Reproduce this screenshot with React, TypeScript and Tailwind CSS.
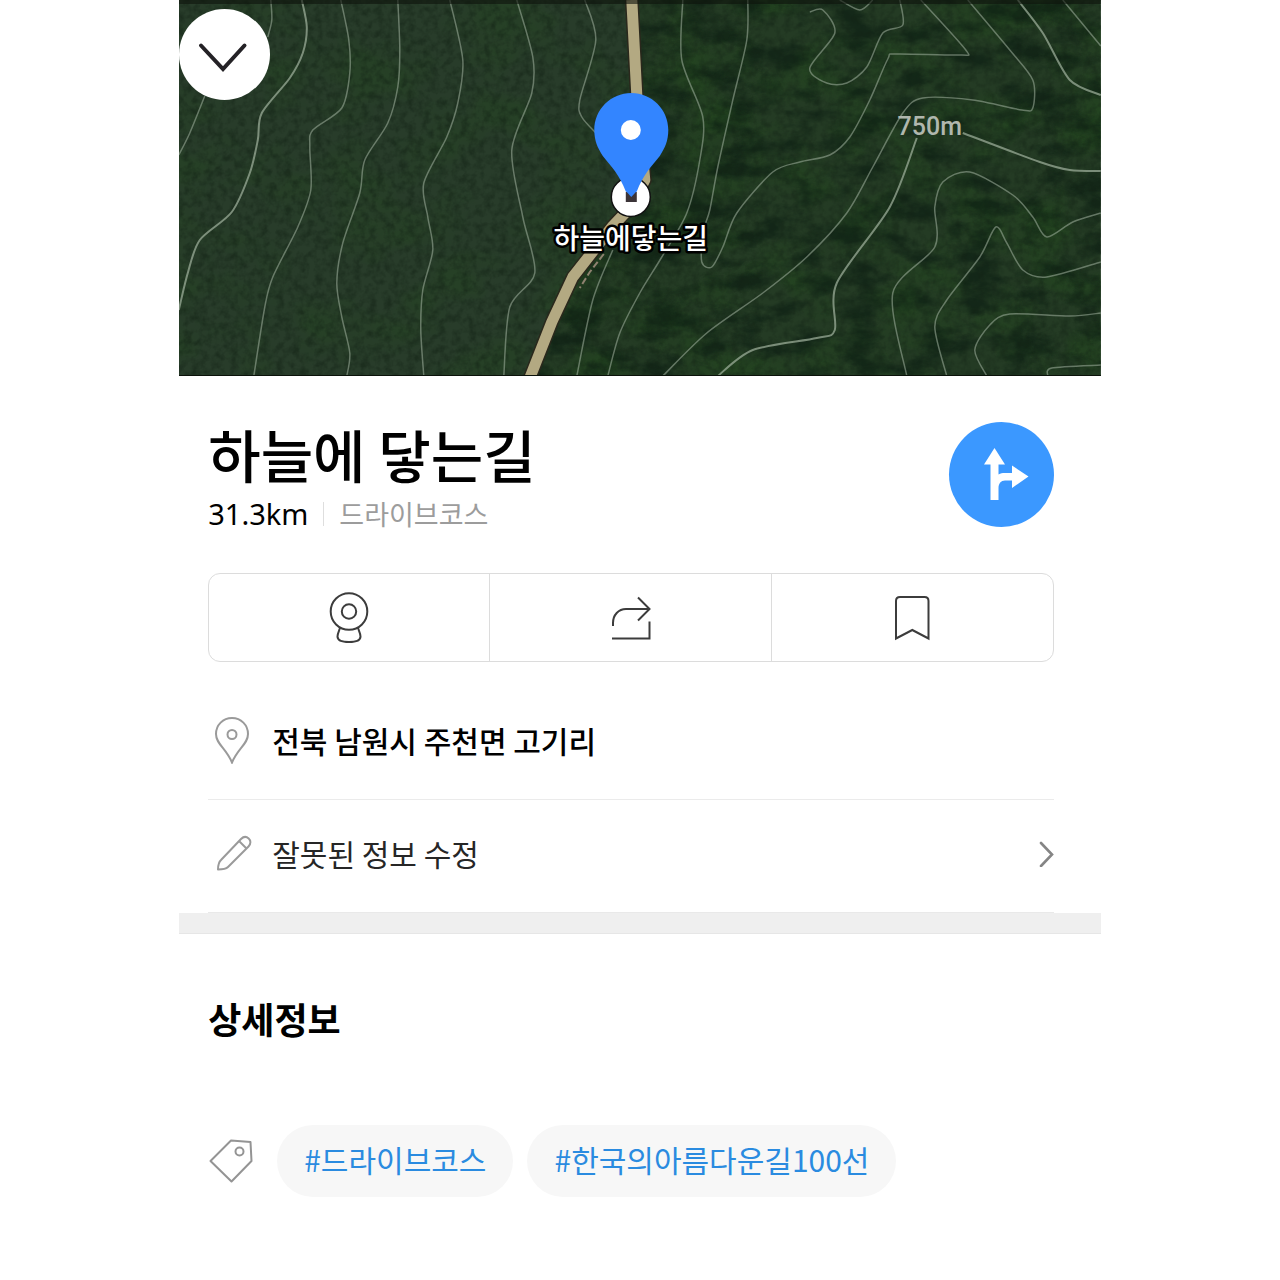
import React from 'react';

type Point = [number, number];

interface Contour {
  points: Point[];
  bold?: boolean;
}

const contours: Contour[] = [
  { bold: true, points: [[302, 0], [307, 27], [303, 53], [290, 78], [262, 113], [258, 140], [250, 173], [232, 212], [200, 240], [188, 273], [179, 310]] },
  { points: [[271, 0], [272, 20], [268, 37]] },
  { points: [[205, 96], [190, 133], [179, 155]] },
  { points: [[341, 0], [349, 40], [350, 73], [342, 108], [313, 130], [310, 147], [311, 190], [298, 227], [273, 277], [265, 307], [254, 376]] },
  { points: [[398, 0], [400, 50], [398, 87], [388, 123], [365, 160], [360, 193], [343, 243], [337, 283], [342, 317], [350, 353], [347, 376]] },
  { points: [[450, 0], [463, 60], [458, 103], [447, 137], [424, 183], [428, 217], [433, 250], [423, 290], [421, 330], [424, 376]] },
  { points: [[517, 0], [533, 57], [532, 93], [512, 150], [523, 217], [535, 273], [510, 307], [504, 376]] },
  { points: [[585, 0], [596, 40], [580, 100], [582, 117], [598, 135]] },
  { points: [[613, 250], [593, 300], [577, 376]] },
  { points: [[683, 0], [682, 60], [703, 117], [700, 160], [687, 213], [662, 257], [640, 293], [620, 333], [608, 376]] },
  { points: [[748, 0], [747, 40], [733, 100], [718, 167], [710, 210], [703, 233], [702, 262], [712, 267], [723, 247], [737, 213], [773, 172], [800, 162], [830, 155], [850, 137], [870, 100], [888, 59], [896, 54], [960, 55], [966, 50], [921, 0]] },
  { points: [[900, 0], [903, 25], [883, 33], [867, 67], [847, 83], [827, 83], [810, 68], [835, 33], [823, 10], [810, 12]] },
  { points: [[840, 0], [860, 10], [873, 0]] },
  { points: [[968, 0], [1010, 50], [1033, 80], [1033, 108], [1022, 110], [973, 100], [923, 98], [903, 113], [873, 167], [847, 213], [807, 257], [763, 293], [707, 333], [663, 376]] },
  { bold: true, points: [[917, 138], [890, 207], [837, 283], [835, 330], [817, 338], [753, 350], [718, 376]] },
  { bold: true, points: [[963, 133], [1040, 162], [1070, 170], [1101, 171]] },
  { bold: true, points: [[1018, 0], [1043, 33], [1070, 80], [1101, 95]] },
  { points: [[1063, 0], [1101, 46]] },
  { points: [[907, 376], [893, 293], [935, 247], [935, 207], [943, 182], [970, 172], [1013, 195], [1033, 217], [1047, 237], [1073, 222], [1101, 213]] },
  { points: [[947, 376], [935, 327], [947, 300], [980, 257], [996, 227], [1007, 243], [1023, 270], [1047, 277], [1101, 262]] },
  { points: [[987, 376], [975, 350], [990, 325], [1010, 314], [1070, 316], [1101, 313]] },
  { points: [[1048, 376], [1052, 368], [1101, 365]] },
];

// Catmull-Rom spline through the survey points
const smoothPath = (points: Point[]) => {
  let d = `M${points[0][0]} ${points[0][1]}`;
  for (let i = 0; i < points.length - 1; i++) {
    const p0 = points[i - 1] ?? points[i];
    const p1 = points[i];
    const p2 = points[i + 1];
    const p3 = points[i + 2] ?? p2;
    d += `C${p1[0] + (p2[0] - p0[0]) / 7} ${p1[1] + (p2[1] - p0[1]) / 7} ${p2[0] - (p3[0] - p1[0]) / 7} ${p2[1] - (p3[1] - p1[1]) / 7} ${p2[0]} ${p2[1]}`;
  }
  return d;
};

const ROAD = 'M632 0L637 95L645 180L632 206L613 226L573 277L552 322L530 378';

const SatelliteMap: React.FC = () => (
  <svg
    className="block w-full h-[376px]"
    viewBox="179 0 922 376"
    preserveAspectRatio="xMidYMid slice"
    role="img"
    aria-label="하늘에닿는길 지도"
  >
    <defs>
      <filter id="fineTrees" x="0" y="0" width="100%" height="100%" colorInterpolationFilters="sRGB">
        <feTurbulence type="fractalNoise" baseFrequency="0.13" numOctaves="3" seed="4" />
        <feColorMatrix values="0 0 0 0 0.07  0 0 0 0 0.13  0 0 0 0 0.08  2.4 0 0 0 -0.95" />
      </filter>
      <filter id="bigTrees" x="0" y="0" width="100%" height="100%" colorInterpolationFilters="sRGB">
        <feTurbulence type="fractalNoise" baseFrequency="0.025 0.045" numOctaves="5" seed="11" />
        <feColorMatrix values="0 0 0 0 0.04  0 0 0 0 0.11  0 0 0 0 0.07  3.4 0 0 0 -1.5" />
      </filter>
      <filter id="canopy" x="0" y="0" width="100%" height="100%" colorInterpolationFilters="sRGB">
        <feTurbulence type="fractalNoise" baseFrequency="0.015 0.02" numOctaves="5" seed="23" />
        <feColorMatrix values="0 0 0 0 0.14  0 0 0 0 0.29  0 0 0 0 0.12  0 2.6 0 0 -1.1" />
      </filter>
      <clipPath id="eastSide">
        <path d="M632 0L637 95L646 180L632 206L573 277L530 376H1101V0Z" />
      </clipPath>
    </defs>

    <rect x="179" width="922" height="376" fill="#283c2a" />
    <rect x="179" width="922" height="376" filter="url(#canopy)" opacity="0.35" />
    <rect x="179" width="922" height="376" filter="url(#fineTrees)" opacity="0.5" />
    <g clipPath="url(#eastSide)">
      <rect x="179" width="922" height="376" fill="#243b24" />
      <rect x="179" width="922" height="376" filter="url(#canopy)" opacity="0.6" />
      <rect x="179" width="922" height="376" filter="url(#bigTrees)" opacity="0.6" />
      <rect x="179" width="922" height="376" filter="url(#fineTrees)" opacity="0.4" />
    </g>

    <g fill="none" stroke="#a3b3a0" strokeLinejoin="round">
      {contours.map(({ points, bold }, i) => (
        <path key={i} d={smoothPath(points)} strokeWidth={bold ? 2 : 1.5} opacity={bold ? 0.7 : 0.55} />
      ))}
    </g>

    <path d={ROAD} fill="none" stroke="#2a281c" strokeWidth="14" strokeLinejoin="round" />
    <path d={ROAD} fill="none" stroke="#b3a982" strokeWidth="11" strokeLinejoin="round" />
    <path d="M604 254L590 272L580 288" fill="none" stroke="#8f8270" strokeWidth="2" strokeDasharray="7 3" />

    <text x="930" y="135" textAnchor="middle" fill="#b0b7ae" className="font-['Roboto',sans-serif] text-[25px] font-medium">
      750m
    </text>

    <circle cx="631" cy="197" r="19.5" fill="#fff" stroke="#111" strokeWidth="1.5" />
    <path
      d="M631.5 93C611 93 594.500 109.500 594.500 130C594.500 141 598 148 603 156C611 166 620 175 626 191.500H637C643 175 652 166 660 156C665 148 668.500 141 668.500 130C668.500 109.500 652 93 631.5 93Z"
      fill="#3385ff"
    />
    <rect x="626" y="192" width="11" height="10" fill="#3b3438" />
    <path d="M626 191H637L631.5 197Z" fill="#3385ff" />
    <circle cx="631" cy="130" r="10" fill="#fff" />

    <text
      x="631"
      y="249"
      textAnchor="middle"
      fill="#fff"
      stroke="#000"
      strokeWidth="5"
      strokeLinejoin="round"
      paintOrder="stroke"
      className="text-[28px] font-medium"
    >
      하늘에닿는길
    </text>

    <rect x="179" width="922" height="4" fill="#0d130c" opacity="0.6" />
    <path d="M179 375.5H1101" stroke="#0b120a" />
  </svg>
);

const RoadviewIcon: React.FC = () => (
  <svg className="w-[44px] h-[56px]" viewBox="0 0 44 56" fill="none" stroke="#3c3c3c" strokeWidth="2">
    <circle cx="22" cy="21.500" r="18.300" />
    <circle cx="22" cy="21.500" r="7.200" />
    <path d="M13 38C12 41 10.500 43.500 10.500 46.500C10.500 50.500 16 52 22 52S33.500 50.500 33.500 46.500C33.500 43.500 32 41 31 38" />
  </svg>
);

const ShareIcon: React.FC = () => (
  <svg className="w-[44px] h-[56px]" viewBox="0 0 44 56" fill="none" stroke="#3c3c3c" strokeWidth="2">
    <path d="M5 36V33C5 25 10.500 19 18 19H41" />
    <path d="M30 7.500L41.500 19L30 30.500" />
    <path d="M41.500 31.500V48.500H4" />
  </svg>
);

const BookmarkIcon: React.FC = () => (
  <svg className="w-[44px] h-[56px]" viewBox="0 0 44 56" fill="none" stroke="#3c3c3c" strokeWidth="2">
    <path d="M6 48.500V11C6 8.500 7.500 7 10 7H34.500C37 7 38.500 8.500 38.500 11V48.500L22.300 40Z" />
  </svg>
);

const PinIcon: React.FC = () => (
  <svg className="w-[48px] h-[48px]" viewBox="0 0 48 48" fill="none" stroke="#9a9a9a" strokeWidth="2">
    <path d="M24 2C15 2 8 9 8 18C8 28 18 32 24 46.500C30 32 40 28 40 18C40 9 33 2 24 2Z" />
    <circle cx="24" cy="18.500" r="4.500" />
  </svg>
);

const PencilIcon: React.FC = () => (
  <svg className="w-[48px] h-[48px]" viewBox="0 0 48 48" fill="none" stroke="#9a9a9a" strokeWidth="2" strokeLinejoin="round">
    <path d="M10 40.500C10 37 11 33 13 31L33 10C35.500 7.500 38.500 7.500 40.700 9.500C43 11.500 43 15 40.500 17.500L20 38C18 40 13.500 40.500 10 40.500Z" />
    <path d="M31 12L38.500 19.500" />
  </svg>
);

const TagIcon: React.FC = () => (
  <svg className="w-[45px] h-[44px] shrink-0" viewBox="0 0 45 44" fill="none" stroke="#949494" strokeWidth="2">
    <path d="M2.500 22L23 1.500L42.500 3L43.500 22L23.500 42.500Z" strokeLinejoin="round" />
    <circle cx="31.500" cy="12.500" r="4" />
  </svg>
);

const actions = [
  { label: '로드뷰', icon: RoadviewIcon },
  { label: '공유', icon: ShareIcon },
  { label: '저장', icon: BookmarkIcon },
];

const tags = ['드라이브코스', '한국의아름다운길100선'];

const App: React.FC = () => {
  return (
    <div className="min-h-screen bg-white text-black font-['Noto_Sans_CJK_KR',sans-serif]">
      <main className="w-[72%] mx-auto">
        <div className="relative overflow-hidden">
          <SatelliteMap />
          <button
            aria-label="닫기"
            className="absolute left-0 top-[9px] w-[91px] h-[91px] rounded-full bg-white flex items-center justify-center"
          >
            <svg className="w-[56px] h-[56px]" viewBox="0 0 56 56" fill="none" stroke="#242226" strokeWidth="4" strokeLinecap="round">
              <path d="M4 18.500L26 42L47.500 18.500" />
            </svg>
          </button>
        </div>

        <section className="pl-[29px] pr-[47px] pt-[46px]">
          <header className="flex items-start justify-between">
            <div>
              <h1 className="text-[57px] leading-[62px] font-medium">하늘에 닿는길</h1>
              <div className="mt-[10px] h-10 flex items-center">
                <span className="text-[29px] leading-10 font-['Noto_Sans',sans-serif]">31.3km</span>
                <span className="mx-[15px] w-px h-6 bg-[#dedede]" />
                <span className="text-[27px] leading-10 text-[#9c9c9c]">드라이브코스</span>
              </div>
            </div>
            <button
              aria-label="길찾기"
              className="w-[105px] h-[105px] shrink-0 rounded-full bg-[#3b98ff] flex items-center justify-center"
            >
              <svg className="w-[56px] h-[56px]" viewBox="0 0 56 56" fill="#fff">
                <path d="M21.500 1L32 17.500H25.500V27.500C27.500 26.300 29.500 26 31.500 26H39V18.500L55.500 29.500L39 41V33.500H32C28 33.500 25.500 36.500 25.500 41V53H17.500V17.500H11Z" />
              </svg>
            </button>
          </header>

          <div className="mt-[39px] h-[89px] grid grid-cols-3 divide-x divide-[#dcdcdc] border border-[#dcdcdc] rounded-xl">
            {actions.map(({ label, icon: Icon }) => (
              <button key={label} aria-label={label} className="flex items-center justify-center">
                <Icon />
              </button>
            ))}
          </div>

          <div className="mt-[25px]">
            <div className="h-[113px] pb-[6px] flex items-center border-b border-[#ebebeb]">
              <PinIcon />
              <span className="ml-4 text-[30px] leading-10 font-medium">전북 남원시 주천면 고기리</span>
            </div>
            <button className="w-full h-[113px] pb-[6px] flex items-center border-b border-[#e9e9e9] text-left">
              <PencilIcon />
              <span className="ml-4 flex-1 text-[30px] leading-10 text-[#262626]">잘못된 정보 수정</span>
              <svg className="w-4 h-7" viewBox="0 0 16 28" fill="none" stroke="#858585" strokeWidth="2.6" strokeLinecap="round">
                <path d="M3 4L14 15.500L3 27" />
              </svg>
            </button>
          </div>
        </section>

        <div className="h-[21px] bg-[#efefef] border-b border-[#e6e6e6]" />

        <section className="pl-[29px] pr-[47px] pt-[60px] pb-20">
          <h2 className="text-[36px] leading-[48px] font-bold">상세정보</h2>
          <div className="mt-[83px] flex items-center">
            <TagIcon />
            <div className="ml-6 flex flex-wrap gap-[14px]">
              {tags.map((tag) => (
                <a
                  key={tag}
                  href="#"
                  className="h-[72px] px-[27px] pb-1 flex items-center rounded-full bg-[#f7f7f7] text-[30px] leading-10 text-[#2a8be0]"
                >
                  #{tag}
                </a>
              ))}
            </div>
          </div>
        </section>
      </main>
    </div>
  );
};

export default App;
